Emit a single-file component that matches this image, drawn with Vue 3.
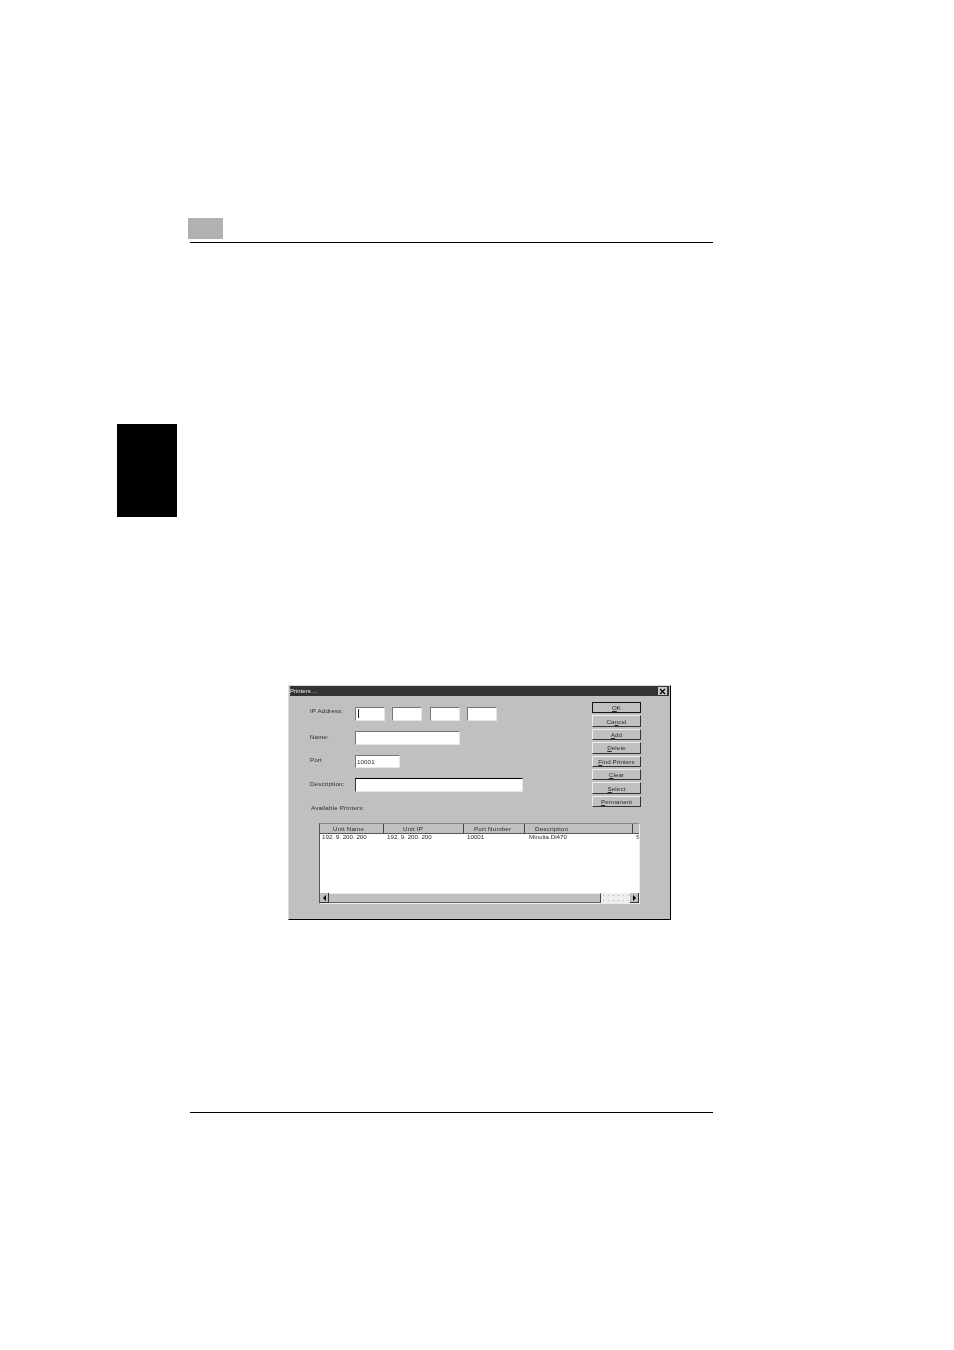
<template>
  <div class="page">
    <header class="page-head">
      <div class="chapter-box"></div>
      <div class="rule"></div>
    </header>

    <div class="side-tab"></div>

    <section class="dialog">
      <div class="title-bar">
        <span>Printers ...</span>
        <span class="close">
          <svg width="7" height="7" viewBox="0 0 7 7"><path d="M1 1l5 5M6 1l-5 5" stroke="#000" stroke-width="1.2" fill="none" /></svg>
        </span>
      </div>

      <div class="dialog-top">
        <div class="form">
          <div class="row">
            <label>IP Address:</label>
            <div class="ip-group">
              <div v-for="n in 4" :key="n" class="field ip"><i v-if="n === 1" class="caret"></i></div>
            </div>
          </div>
          <div class="row">
            <label class="low">Name:</label>
            <div class="field name"></div>
          </div>
          <div class="row port-row">
            <label class="mid">Port</label>
            <div class="field port">10001</div>
          </div>
          <div class="row">
            <label class="low">Description:</label>
            <div class="field desc"></div>
          </div>
          <div class="available">Available Printers:</div>
        </div>

        <div class="buttons">
          <button v-for="b in buttons" :key="b.after" class="btn" :class="{ primary: b.primary }">
            {{ b.before }}<u>{{ b.key }}</u>{{ b.after }}
          </button>
        </div>
      </div>

      <div class="list">
        <div class="list-head">
          <div
            v-for="c in columns"
            :key="c.label"
            class="col-head"
            :style="{ width: c.width + 'px', paddingLeft: c.pad + 'px' }"
          >{{ c.label }}</div>
        </div>
        <div class="list-body">
          <div class="list-row">
            <span v-for="(c, i) in rowCells" :key="i" :style="{ width: c.width + 'px', paddingLeft: c.pad + 'px' }">{{ c.text }}</span>
          </div>
        </div>
        <div class="scrollbar">
          <div class="arrow"><i class="tri left"></i></div>
          <div class="thumb"></div>
          <div class="track"></div>
          <div class="arrow"><i class="tri right"></i></div>
        </div>
      </div>
    </section>

    <div class="rule foot-rule"></div>
  </div>
</template>

<script setup>
const buttons = [
  { before: '', key: 'O', after: 'K', primary: true },
  { before: 'Ca', key: 'n', after: 'cel' },
  { before: '', key: 'A', after: 'dd' },
  { before: '', key: 'D', after: 'elete' },
  { before: '', key: 'F', after: 'ind Printers' },
  { before: '', key: 'C', after: 'lear' },
  { before: '', key: 'S', after: 'elect' },
  { before: '', key: 'P', after: 'ermanent' }
]

const columns = [
  { label: 'Unit Name', width: 64, pad: 13 },
  { label: 'Unit IP', width: 80, pad: 19 },
  { label: 'Port Number', width: 61, pad: 10 },
  { label: 'Description', width: 108, pad: 10 }
]

const rowCells = [
  { text: '192. 9. 200. 200', width: 64, pad: 2 },
  { text: '192. 9. 200. 200', width: 80, pad: 3 },
  { text: '10001', width: 61, pad: 3 },
  { text: 'Minolta Di470', width: 108, pad: 4 },
  { text: 'S', width: 6, pad: 3 }
]
</script>

<style>
html, body {
  margin: 0;
  background: #fff;
}
</style>

<style scoped>
.page {
  width: 954px;
  height: 1350px;
  padding-top: 218px;
  box-sizing: border-box;
  overflow: hidden;
  font-family: "Liberation Sans", Arial, sans-serif;
  background: #fff;
}

.page-head {
  margin-left: 188px;
}

.chapter-box {
  width: 35px;
  height: 21px;
  background: #b1b1b1;
}

.rule {
  height: 1px;
  width: 523px;
  background: #000;
}

.page-head .rule {
  margin: 3px 0 0 2px;
}

.side-tab {
  width: 60px;
  height: 93px;
  margin: 181px 0 0 117px;
  background: #000;
}

.dialog {
  width: 383px;
  height: 235px;
  margin: 168px 0 0 288px;
  box-sizing: border-box;
  background: #c0c0c0;
  border: 1px solid #dcdcdc;
  border-right-color: #000;
  border-bottom-color: #000;
  font-size: 6.2px;
  color: #2a2a2a;
  filter: grayscale(1) blur(0.3px);
}

.title-bar {
  height: 10px;
  margin: 0 1px;
  padding: 0 2px 0 0;
  background: #333;
  color: #f2f2f2;
  font-size: 6px;
  display: flex;
  align-items: center;
  justify-content: space-between;
}

.close {
  width: 9px;
  height: 8px;
  background: #c8c8c8;
  display: flex;
  align-items: center;
  justify-content: center;
}

.dialog-top {
  display: flex;
  height: 116px;
}

.form {
  width: 303px;
  padding: 11px 0 0 21px;
  box-sizing: border-box;
  flex: none;
  display: flex;
  flex-direction: column;
  gap: 10px;
}

.row {
  display: flex;
  height: 14px;
}

.port-row {
  height: 13px;
}

.row label {
  width: 45px;
  flex: none;
  letter-spacing: 0.15px;
  line-height: 7px;
}

.row label.low {
  padding-top: 2px;
}

.row label.mid {
  padding-top: 1px;
}

.ip-group {
  display: flex;
  gap: 7.3px;
}

.field {
  height: 14px;
  box-sizing: border-box;
  background: #fff;
  border: 1px solid #e6e6e6;
  border-top-color: #777;
  border-left-color: #777;
  line-height: 11px;
  padding-left: 1px;
  letter-spacing: 0.1px;
}

.ip {
  width: 30px;
}

.caret {
  display: block;
  width: 1px;
  height: 9px;
  margin: 1px 0 0 1px;
  background: #222;
}

.name {
  width: 105px;
}

.port {
  width: 45px;
  height: 13px;
}

.desc {
  width: 168px;
  border-top-color: #000;
  border-left-color: #333;
}

.available {
  height: 8px;
  line-height: 8px;
  margin: 2px 0 0 1px;
  letter-spacing: 0.2px;
}

.buttons {
  padding-top: 6px;
  display: flex;
  flex-direction: column;
  gap: 2px;
}

.btn {
  display: block;
  width: 49px;
  height: 11.4px;
  padding: 0;
  box-sizing: border-box;
  background: #c0c0c0;
  border: 1px solid #eee;
  border-right-color: #333;
  border-bottom-color: #333;
  font-family: inherit;
  font-size: 6.2px;
  line-height: 9px;
  color: #2a2a2a;
  letter-spacing: 0.1px;
  text-align: center;
}

.btn.primary {
  border: 1px solid #111;
}

.list {
  width: 321px;
  height: 81px;
  margin: 11px 0 0 30px;
  box-sizing: border-box;
  border: 1px solid #ececec;
  border-top-color: #888;
  border-left-color: #555;
  display: flex;
  flex-direction: column;
  background: #fff;
}

.list-head {
  display: flex;
  height: 10px;
  flex: none;
  background: #c0c0c0;
  border-bottom: 1px solid #555;
  box-sizing: border-box;
}

.col-head {
  box-sizing: border-box;
  flex: none;
  line-height: 9px;
  border-right: 1px solid #444;
  letter-spacing: 0.2px;
}

.list-body {
  flex: 1;
  overflow: hidden;
}

.list-row {
  display: flex;
  line-height: 5px;
  white-space: nowrap;
}

.list-row span {
  flex: none;
  box-sizing: border-box;
}

.scrollbar {
  display: flex;
  height: 10px;
  flex: none;
  background: #c0c0c0;
}

.arrow {
  width: 9px;
  flex: none;
  display: flex;
  align-items: center;
  justify-content: center;
  box-sizing: border-box;
  border-right: 1px solid #333;
  border-bottom: 1px solid #333;
  background: #c0c0c0;
}

.tri {
  width: 0;
  height: 0;
  border-top: 3px solid transparent;
  border-bottom: 3px solid transparent;
}

.tri.left {
  border-right: 3px solid #000;
}

.tri.right {
  border-left: 3px solid #000;
}

.thumb {
  flex: 1;
  box-sizing: border-box;
  border-right: 1px solid #444;
  border-bottom: 1px solid #666;
  border-top: 1px solid #e8e8e8;
}

.track {
  width: 29px;
  flex: none;
  background-color: #eee;
  background-image: radial-gradient(#b4b4b4 0.6px, transparent 0.7px);
  background-size: 5px 5px;
}

.foot-rule {
  margin: 192px 0 0 190px;
}
</style>
